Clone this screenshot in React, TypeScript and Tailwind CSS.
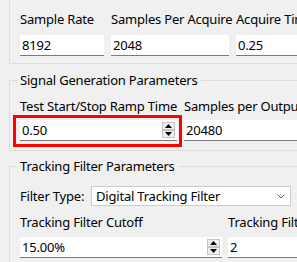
import React from 'react';

function LineEdit({ value, width }: { value: string; width: string }) {
  return (
    <div className={`${width} h-[21px] bg-white border-b border-[#7a7a7a] pl-[2px] flex items-center`}>
      <span>{value}</span>
    </div>
  );
}

function SpinArrows() {
  return (
    <div className="flex flex-col mr-[2px]">
      <div className="w-[13px] h-[8px] bg-[#f0f0f0] border border-[#c4c4c4] flex items-center justify-center">
        <svg width="7" height="4" viewBox="0 0 7 4">
          <path d="M3.5 0 L7 4 L0 4 Z" fill="#000" />
        </svg>
      </div>
      <div className="w-[13px] h-[8px] bg-[#f0f0f0] border border-[#c4c4c4] flex items-center justify-center">
        <svg width="7" height="4" viewBox="0 0 7 4">
          <path d="M0 0 L7 0 L3.5 4 Z" fill="#000" />
        </svg>
      </div>
    </div>
  );
}

function SpinBox({ value, width }: { value: string; width: string }) {
  return (
    <div className={`${width} h-[21px] bg-white border-b border-[#7a7a7a] pl-[2px] flex items-center justify-between`}>
      <span>{value}</span>
      <SpinArrows />
    </div>
  );
}

function Field({ label, width, children }: { label: string; width: string; children: React.ReactNode }) {
  return (
    <div className={`${width} flex flex-col shrink-0`}>
      <div className="h-[16px] whitespace-nowrap">{label}</div>
      {children}
    </div>
  );
}

export default function App() {
  return (
    <div className="w-[297px] h-[262px] overflow-hidden bg-[#f0f0f0] font-['Noto_Sans',sans-serif] text-[13px] leading-[16px] tracking-[-0.2px] text-black">
      <div className="-mt-[16px] pl-[9px] w-[400px] flex flex-col">
        {/* Sampling */}
        <fieldset className="border border-[#dcdcdc] pl-[7px] pb-[7px]">
          <legend className="px-[3px] h-[16px]">Sampling Parameters</legend>
          <div className="pl-[3px] pt-[11px] flex gap-[7px]">
            <Field label="Sample Rate" width="w-[84px]">
              <div className="mt-[8px]"><LineEdit value="8192" width="w-[84px]" /></div>
            </Field>
            <Field label="Samples Per Acquire" width="w-[118px]">
              <div className="mt-[8px]"><LineEdit value="2048" width="w-[118px]" /></div>
            </Field>
            <Field label="Acquire Time" width="w-[100px]">
              <div className="mt-[8px]"><LineEdit value="0.25" width="w-[100px]" /></div>
            </Field>
          </div>
        </fieldset>

        {/* Signal generation */}
        <fieldset className="mt-[8px] border border-[#dcdcdc] pl-[7px] pb-[9px]">
          <legend className="px-[3px] h-[16px]">Signal Generation Parameters</legend>
          <div className="pl-[3px] pt-[10px] flex gap-[7px]">
            <Field label="Test Start/Stop Ramp Time" width="w-[157px]">
              <div className="mt-[6px] relative">
                <SpinBox value="0.50" width="w-[157px]" />
                <div className="absolute -left-[7px] -right-[5px] -top-[5px] -bottom-[6px] border-[3px] border-[#ff0000]" />
              </div>
            </Field>
            <Field label="Samples per Output" width="w-[150px]">
              <div className="mt-[6px]"><LineEdit value="20480" width="w-[150px]" /></div>
            </Field>
          </div>
        </fieldset>

        {/* Tracking filter */}
        <fieldset className="mt-[7px] border border-[#dcdcdc] pl-[7px] pb-[8px]">
          <legend className="px-[3px] h-[16px]">Tracking Filter Parameters</legend>
          <div className="pl-[3px] pt-[12px] flex flex-col">
            <div className="flex items-center h-[20px]">
              <span className="w-[71px] shrink-0">Filter Type:</span>
              <div className="w-[200px] h-[20px] bg-white border border-[#cccccc] pl-[4px] pr-[5px] flex items-center justify-between">
                <span>Digital Tracking Filter</span>
                <svg width="8" height="5" viewBox="0 0 8 5">
                  <path d="M0.5 0.5 L4 4 L7.5 0.5" fill="none" stroke="#606060" strokeWidth="1" />
                </svg>
              </div>
            </div>
            <div className="mt-[8px] flex gap-[6px]">
              <Field label="Tracking Filter Cutoff" width="w-[202px]">
                <div className="mt-[7px]"><SpinBox value="15.00%" width="w-[202px]" /></div>
              </Field>
              <Field label="Tracking Filter Order" width="w-[100px]">
                <div className="mt-[7px]"><LineEdit value="2" width="w-[100px]" /></div>
              </Field>
            </div>
          </div>
        </fieldset>
      </div>
    </div>
  );
}
